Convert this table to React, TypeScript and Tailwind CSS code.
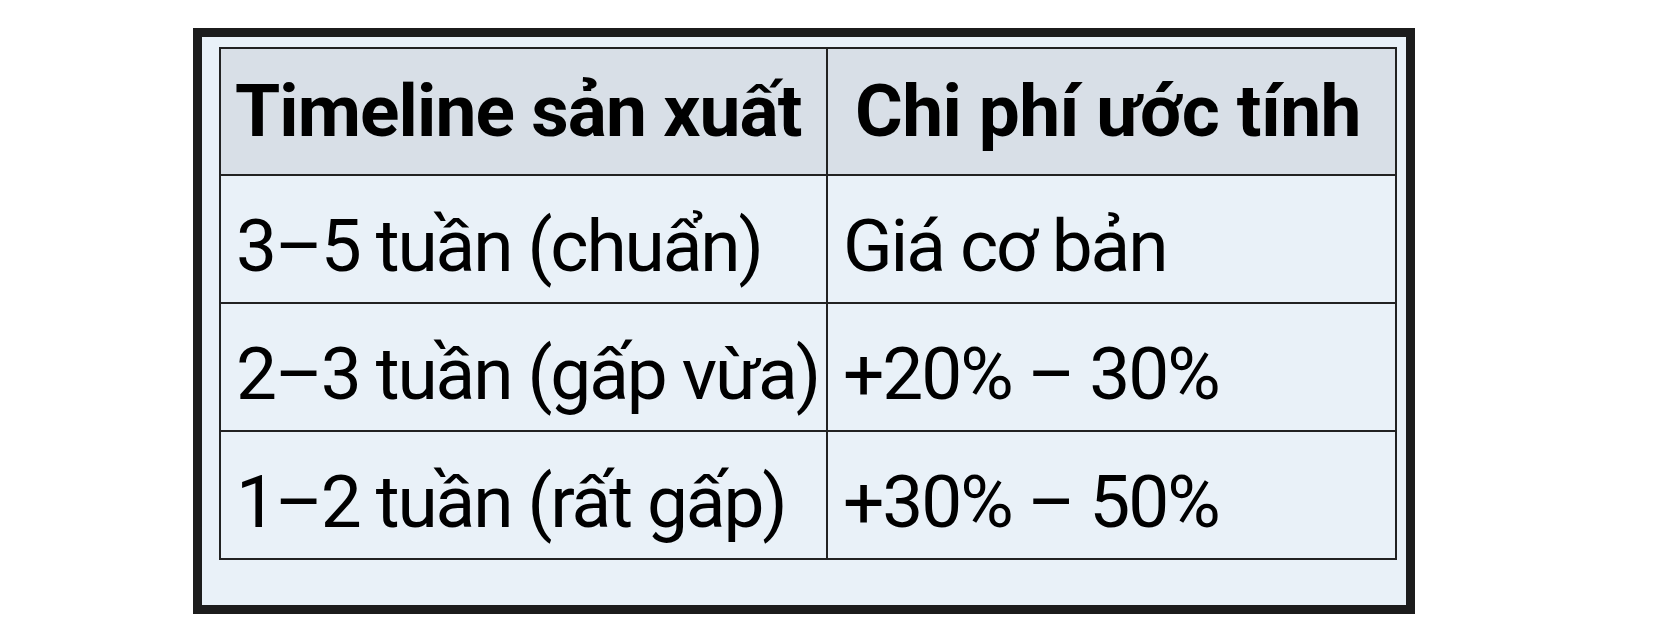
export default function App() {
  const rows = [
    ["3–5 tuần (chuẩn)", "Giá cơ bản"],
    ["2–3 tuần (gấp vừa)", "+20% – 30%"],
    ["1–2 tuần (rất gấp)", "+30% – 50%"],
  ];

  return (
    <div className="w-[1663px] h-[640px] bg-white pt-[28px] pl-[193px]" style={{ fontFamily: "Roboto, 'Noto Sans', sans-serif" }}>
      <div className="w-[1222px] h-[586px] border-[9px] border-[#1c1c1c] bg-[#e9f1f8] pl-[17px] pt-[10px]">
        <table className="border-collapse text-black">
          <thead>
            <tr className="bg-[#d8dfe7]">
              <th className="w-[607px] h-[127px] border-2 border-[#222] text-left align-middle pl-[14px] text-[73px] font-bold leading-none tracking-[-0.9px]">
                Timeline sản xuất
              </th>
              <th className="w-[569px] h-[127px] border-2 border-[#222] text-left align-middle pl-[27px] text-[73px] font-bold leading-none tracking-[-0.6px]">
                Chi phí ước tính
              </th>
            </tr>
          </thead>
          <tbody>
            {rows.map((r) => (
              <tr key={r[0]}>
                <td className="h-[128px] border-2 border-[#222] pl-[15px] pt-[14px] text-[73px] leading-none tracking-[-2.1px] align-middle">{r[0]}</td>
                <td className="h-[128px] border-2 border-[#222] pl-[15px] pt-[14px] text-[73px] leading-none tracking-[-2.1px] align-middle">{r[1]}</td>
              </tr>
            ))}
          </tbody>
        </table>
      </div>
    </div>
  );
}
